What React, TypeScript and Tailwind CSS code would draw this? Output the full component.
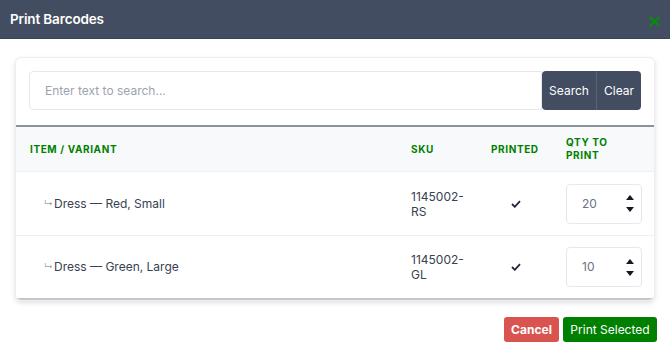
import React from 'react';

const rows = [
  { name: 'Dress — Red, Small', sku: ['1145002-', 'RS'], qty: 20 },
  { name: 'Dress — Green, Large', sku: ['1145002-', 'GL'], qty: 10 },
];

const COLS = 'grid grid-cols-[381px_80px_75px_104px]';

function Spinner() {
  return (
    <div className="flex flex-col items-center gap-[7px]">
      <svg width="8" height="5" viewBox="0 0 8 5"><path d="M4 0L8 5H0z" fill="#111827" /></svg>
      <svg width="8" height="5" viewBox="0 0 8 5"><path d="M0 0h8L4 5z" fill="#111827" /></svg>
    </div>
  );
}

export default function App() {
  return (
    <div className="w-[670px] h-[357px] bg-white [font-family:Inter,sans-serif] text-[#374151]">
      {/* header */}
      <div className="h-[39px] bg-[#434d61] border-b border-[#3a4355] flex items-center justify-between pl-[10px] pr-[10px]">
        <span className="text-white text-[13.5px] font-semibold tracking-[-0.01em]">Print Barcodes</span>
        <svg width="11" height="11" viewBox="0 0 11 11" className="mt-[5px]">
          <path d="M1.5 1.5l8 8M9.5 1.5l-8 8" stroke="#0a8a0a" strokeWidth="2.4" strokeLinecap="round" />
        </svg>
      </div>

      {/* card */}
      <div className="mt-[18px] ml-[15px] w-[640px] rounded-[6px] border border-[#eceef1] bg-white shadow-[0_2px_5px_rgba(0,0,0,0.12)] overflow-hidden">
        <div className="flex p-[13px] pb-[15px]">
          <div className="flex-1 h-[39px] border border-[#e6e8eb] rounded-l-[4px] flex items-center px-[15px] text-[12px] text-[#9ca3af]">
            Enter text to search...
          </div>
          <button className="h-[39px] w-[55px] bg-[#434d61] text-white text-[12px] rounded-l-[4px] border-r border-[#5a6477]">Search</button>
          <button className="h-[39px] w-[44px] bg-[#434d61] text-white text-[12px] rounded-r-[4px]">Clear</button>
        </div>

        <div className={`${COLS} h-[47px] bg-[#f8f9fa] border-t-2 border-[#8d939b] border-b border-b-[#eef0f2] items-center text-[10px] font-bold tracking-[0.06em] text-[#008000] leading-[13px]`}>
          <div className="pl-[14px]">ITEM / VARIANT</div>
          <div className="pl-[14px]">SKU</div>
          <div className="pl-[14px]">PRINTED</div>
          <div className="pl-[14px] pr-[30px]">QTY TO PRINT</div>
        </div>

        {rows.map((r, i) => (
          <div
            key={r.sku[1]}
            className={`${COLS} h-[64px] items-center text-[12px] ${i < rows.length - 1 ? 'border-b border-[#eceef1]' : 'border-b-2 border-[#c3c7cd]'}`}
          >
            <div className="pl-[28px] flex items-center">
              <span className="text-[9px] text-[#9ca3af] w-[10px]">↳</span>
              <span className="text-[#374151]">{r.name}</span>
            </div>
            <div className="pl-[14px] leading-[15px] text-[#374151]">
              <div>{r.sku[0]}</div>
              <div>{r.sku[1]}</div>
            </div>
            <div className="flex justify-center pl-[2px]">
              <svg width="10" height="8" viewBox="0 0 10 8">
                <path d="M1 4l2.8 2.8L9 1.2" stroke="#1f2937" strokeWidth="1.8" fill="none" />
              </svg>
            </div>
            <div className="pl-[14px]">
              <div className="w-[76px] h-[40px] border border-[#e6e8eb] rounded-[4px] flex items-center justify-between pl-[15px] pr-[7px]">
                <span className="text-[#6b7280] text-[12px]">{r.qty}</span>
                <Spinner />
              </div>
            </div>
          </div>
        ))}
      </div>

      {/* footer */}
      <div className="flex justify-end gap-[4px] pr-[13px] mt-[16px]">
        <button className="h-[25px] w-[55px] rounded-[3px] bg-[#d9534f] text-white text-[12px] font-bold">Cancel</button>
        <button className="h-[25px] w-[94px] rounded-[3px] bg-[#008000] text-white text-[12px]">Print Selected</button>
      </div>
    </div>
  );
}
